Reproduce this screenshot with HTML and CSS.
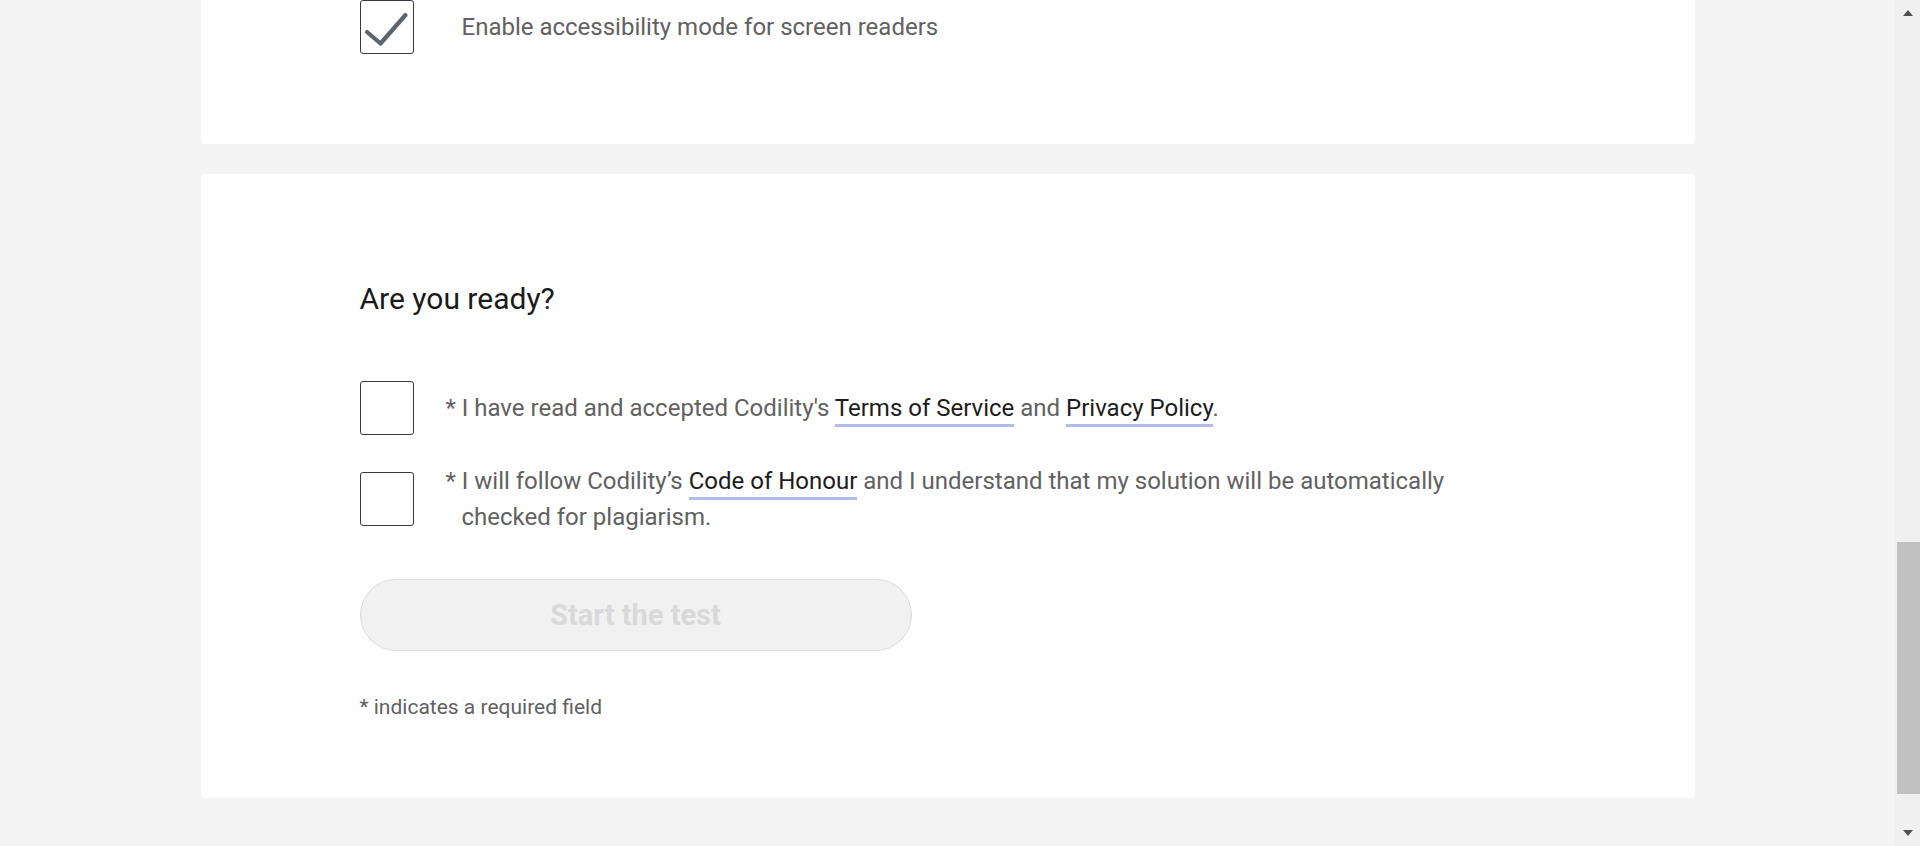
FILE: index.html
```html
<!DOCTYPE html>
<html lang="en">
<head>
<meta charset="utf-8">
<title>Are you ready?</title>
<link rel="stylesheet" href="styles.css">
</head>
<body>
<div class="window">
  <main class="viewport">
    <div class="page">
      <section class="card card-top">
        <label class="option">
          <span class="box checked">
            <svg viewBox="0 0 54 54" width="54" height="54" aria-hidden="true"><path d="M7 32 L20.5 43.5 L45.5 15" fill="none" stroke="#5d646c" stroke-width="4.2" stroke-linecap="round" stroke-linejoin="round"/></svg>
          </span>
          <span class="option-text">Enable accessibility mode for screen readers</span>
        </label>
      </section>

      <section class="card card-ready">
        <h2 class="title">Are you ready?</h2>
        <div class="consents">
          <label class="option">
            <span class="box"></span>
            <span class="option-text required">* I have read and accepted Codility's <a class="link" href="#">Terms of Service</a> and <a class="link" href="#">Privacy Policy</a>.</span>
          </label>
          <label class="option">
            <span class="box"></span>
            <span class="option-text required">* I will follow Codility’s <a class="link" href="#">Code of Honour</a> and I understand that my solution will be automatically checked for plagiarism.</span>
          </label>
        </div>
        <button class="start" type="button" disabled>Start the test</button>
        <p class="note">* indicates a required field</p>
      </section>
    </div>
  </main>
  <div class="scrollbar">
    <span class="arrow up"></span>
    <div class="track"><div class="thumb"></div></div>
    <span class="arrow down"></span>
  </div>
</div>
</body>
</html>
```
FILE: styles.css
```css
* { box-sizing: border-box; }
html, body {
  margin: 0;
  height: 846px;
  overflow: hidden;
  background: #f4f4f4;
  font-family: Roboto, "Liberation Sans", Arial, sans-serif;
}
.window {
  display: flex;
  height: 846px;
}
.viewport {
  flex: 1;
  overflow: hidden;
}
.page {
  width: 1494px;
  margin: -12px auto 0;
  display: flex;
  flex-direction: column;
  gap: 30px;
}
.card {
  background: #fff;
  border-radius: 4px;
  padding-left: 159px;
  padding-right: 159px;
}
.card-top {
  padding-top: 12px;
  padding-bottom: 90px;
}
.card-ready {
  padding-top: 107px;
  padding-bottom: 76px;
}
.option {
  display: flex;
  align-items: center;
  gap: 48px;
  cursor: pointer;
}
.box {
  flex: none;
  width: 54px;
  height: 54px;
  border: 1px solid #3a3a3a;
  border-radius: 3px;
  background: #fff;
  display: flex;
  align-items: center;
  justify-content: center;
}
.box svg { display: block; margin: -1px; }
.option-text {
  font-size: 24px;
  line-height: 36px;
  color: #616161;
  max-width: 1030px;
}
.required {
  text-indent: -16px;
}
.link {
  color: #1c1c1c;
  text-decoration: none;
  padding-bottom: 2px;
  border-bottom: 3px solid #b3baee;
}
.title {
  margin: 0;
  font-size: 30px;
  line-height: 36px;
  font-weight: 400;
  color: #1a1a1a;
}
.consents {
  margin-top: 64px;
  display: flex;
  flex-direction: column;
  gap: 28px;
}
.start {
  margin-top: 44px;
  width: 552px;
  height: 72px;
  border: 1px solid #dcdcdc;
  border-radius: 36px;
  background: #f1f1f1;
  color: #d9d9d9;
  font-family: Roboto, "Liberation Sans", Arial, sans-serif;
  font-size: 29px;
  font-weight: 700;
  padding: 0;
}
.note {
  margin: 41px 0 0;
  font-size: 21px;
  line-height: 30px;
  color: #616161;
}
.scrollbar {
  flex: none;
  width: 25px;
  height: 846px;
  background: #f0f0f0;
  display: flex;
  flex-direction: column;
  align-items: center;
  padding: 10px 0 10px 2px;
}
.track {
  flex: 1;
  width: 100%;
  padding: 526px 0 36px;
  display: flex;
}
.thumb {
  flex: 1;
  background: #c1c1c1;
}
.arrow {
  width: 0;
  height: 0;
  border-left: 5px solid transparent;
  border-right: 5px solid transparent;
  margin-left: -2px;
}
.arrow.up { border-bottom: 6px solid #505050; }
.arrow.down { border-top: 6px solid #505050; }
```
